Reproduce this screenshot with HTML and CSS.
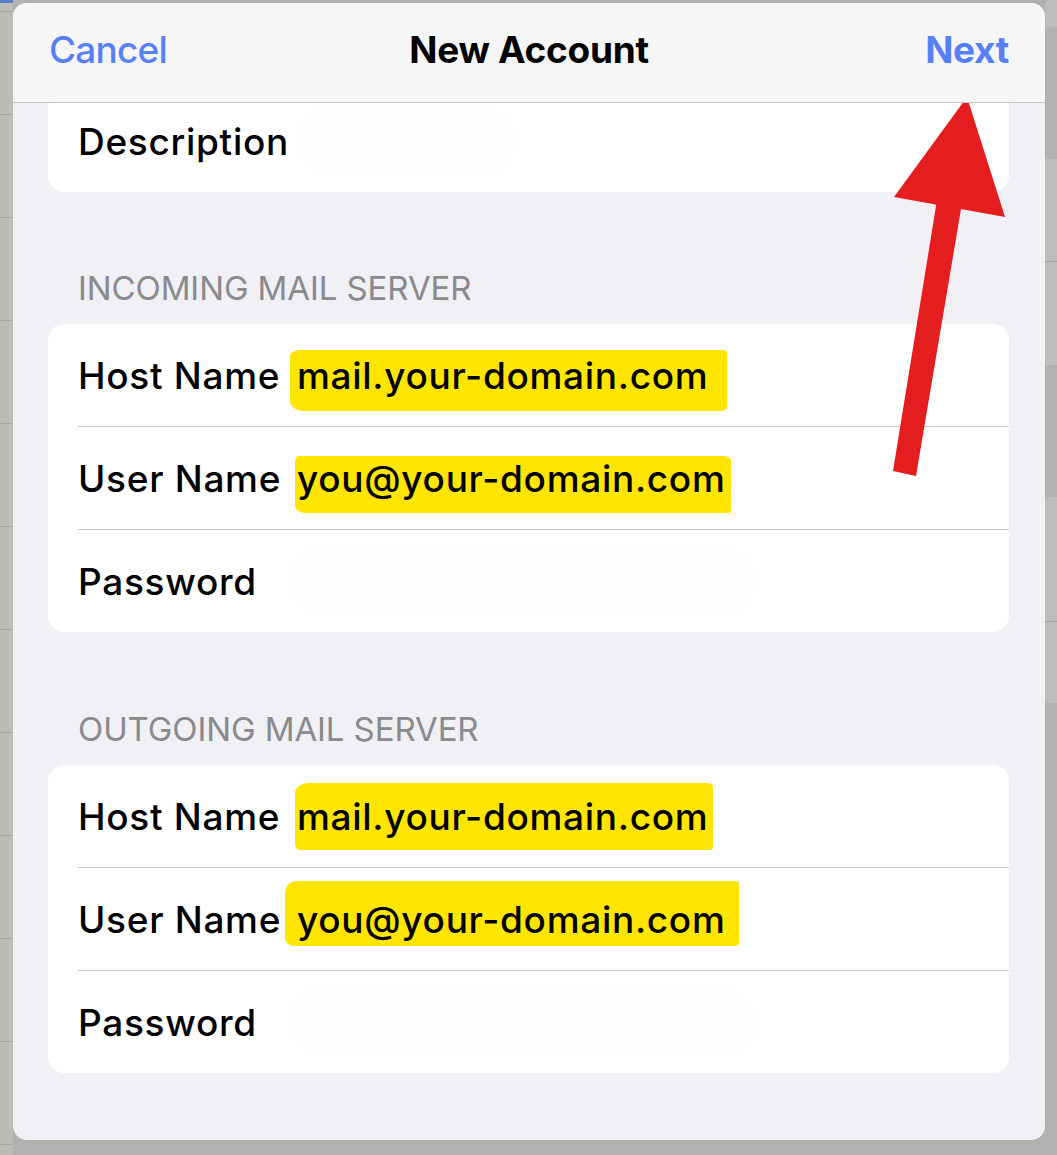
FILE: index.html
```html
<!DOCTYPE html>
<html lang="en">
<head>
    <meta charset="UTF-8">
    <meta name="viewport" content="width=device-width, initial-scale=1.0">
    <title>New Account</title>
    <link rel="stylesheet" href="styles.css">
</head>
<body>
    <div class="strip-left"></div>

    <div class="sheet">
        <div class="nav-bar">
            <span class="nav-btn">Cancel</span>
            <span class="nav-title">New Account</span>
            <span class="nav-btn nav-next">Next</span>
        </div>

        <div class="content">
            <div class="card card-top">
                <div class="row">
                    <span class="label">Description</span>
                    <span class="value"><span class="smudge"></span></span>
                </div>
            </div>

            <div class="caption">INCOMING MAIL SERVER</div>
            <div class="card">
                <div class="row">
                    <span class="label">Host Name</span>
                    <span class="value"><mark class="hl hl-a">mail.your-domain.com</mark></span>
                </div>
                <div class="row">
                    <span class="label">User Name</span>
                    <span class="value"><mark class="hl hl-b">you@your-domain.com</mark></span>
                </div>
                <div class="row">
                    <span class="label">Password</span>
                    <span class="value"><span class="smudge wide"></span></span>
                </div>
            </div>

            <div class="caption caption-low">OUTGOING MAIL SERVER</div>
            <div class="card">
                <div class="row">
                    <span class="label">Host Name</span>
                    <span class="value"><mark class="hl hl-c">mail.your-domain.com</mark></span>
                </div>
                <div class="row">
                    <span class="label">User Name</span>
                    <span class="value"><mark class="hl hl-d">you@your-domain.com</mark></span>
                </div>
                <div class="row">
                    <span class="label">Password</span>
                    <span class="value"><span class="smudge wide"></span></span>
                </div>
            </div>
        </div>
    </div>

    <div class="strip-right"></div>

    <!-- red arrow pointing at "Next" -->
    <svg class="arrow" width="1057" height="1155" viewBox="0 0 1057 1155">
        <polygon points="967,97 894,197 1005,217" fill="#e41d1f"/>
        <polygon points="937,200 962,203 916,476 893,471" fill="#e41d1f"/>
    </svg>
</body>
</html>
```

FILE: styles.css
```css
body {
    margin: 0;
    height: 1155px;
    overflow: hidden;
    display: flex;
    position: relative;
    background-color: #b1b2b0;
    font-family: Inter, "Noto Sans", sans-serif;
    color: #000;
}

.strip-left {
    width: 13px;
    flex-shrink: 0;
    background:
        linear-gradient(to bottom, #5b7fc6 0 3px, transparent 3px),
        repeating-linear-gradient(to bottom, #a4a6a3 0 1px, #bcbdb9 1px 103px);
    background-position: 0 0, 0 11px;
}

.strip-right {
    width: 12px;
    flex-shrink: 0;
    background: linear-gradient(to bottom,
        #bdbebb 0 27px, #b1b2b0 27px 159px,
        #bdbebb 159px 261px, #a5a6a4 261px 262px, #bdbebb 262px 365px,
        #b1b2b0 365px 497px,
        #bdbebb 497px 621px, #a5a6a4 621px 622px, #bdbebb 622px 703px,
        #b1b2b0 703px);
}

.sheet {
    width: 1032px;
    height: 1137px;
    margin-top: 3px;
    flex-shrink: 0;
    border-radius: 14px;
    overflow: hidden;
    background-color: #f0f0f5;
    display: flex;
    flex-direction: column;
}

.nav-bar {
    position: relative;
    z-index: 1;
    height: 100px;
    box-sizing: border-box;
    display: grid;
    grid-template-columns: 1fr auto 1fr;
    align-items: center;
    padding: 0 36px 6px 36px;
    background-color: #f6f6f6;
    border-bottom: 1px solid #c6c6c8;
    font-size: 37px;
}

.nav-btn {
    color: #5880f6;
    font-weight: 500;
    letter-spacing: -0.8px;
}

.nav-next {
    font-weight: 700;
    letter-spacing: -0.3px;
    justify-self: end;
}

.nav-title {
    font-weight: 700;
    letter-spacing: -0.3px;
}

.content {
    padding: 0 36px 0 35px;
}

.card {
    background-color: #fff;
    border-radius: 16px;
    overflow: hidden;
}

.card-top {
    margin-top: -13px;
}

.caption {
    height: 132px;
    box-sizing: border-box;
    padding: 0 0 16px 30px;
    display: flex;
    align-items: flex-end;
    color: #8a8a8e;
    font-size: 33px;
    letter-spacing: -0.1px;
}

.caption-low {
    height: 133px;
}

.row {
    height: 103px;
    display: flex;
    align-items: center;
    margin-left: 30px;
    border-top: 1px solid #c8c8cb;
    box-sizing: border-box;
    font-size: 37px;
    font-weight: 500;
    letter-spacing: 0.7px;
}

.row:first-child {
    border-top: none;
    height: 102px;
}

.label {
    width: 219px;
    flex-shrink: 0;
    white-space: nowrap;
}

.value {
    display: block;
    white-space: nowrap;
}

/* hand-drawn marker strokes */
.hl {
    color: #000;
    background-color: #ffe500;
}

.hl-a {
    padding: 3px 19px 13px 7px;
    margin-left: -7px;
    border-radius: 10px 4px 6px 14px / 6px 3px 4px 10px;
}

.hl-b {
    padding: 0 6px 12px 2px;
    margin-left: -2px;
    border-radius: 4px 8px 3px 10px / 6px 4px 3px 8px;
}

.hl-c {
    padding: 11px 5px 11px 2px;
    margin-left: -2px;
    border-radius: 14px 6px 3px 6px / 10px 4px 3px 6px;
}

.hl-d {
    padding: 16px 14px 4px 12px;
    margin-left: -12px;
    border-radius: 12px 3px 4px 10px / 12px 3px 4px 8px;
}

.smudge {
    display: block;
    width: 220px;
    height: 70px;
    border-radius: 40px;
    background-color: #fefefe;
}

.smudge.wide {
    width: 470px;
    margin-left: -10px;
}

.arrow {
    position: absolute;
    left: 0;
    top: 0;
    pointer-events: none;
}
```
